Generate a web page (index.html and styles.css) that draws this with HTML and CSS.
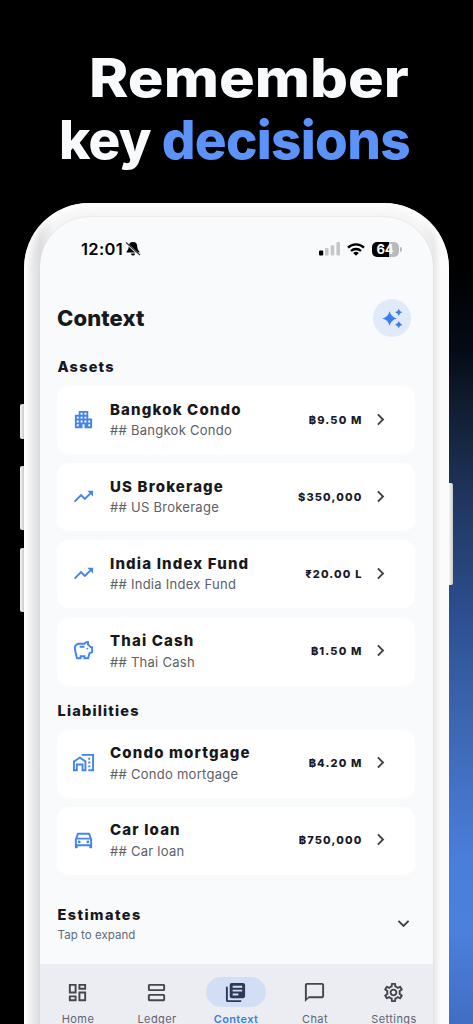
FILE: index.html
```html
<!DOCTYPE html>
<html lang="en">
<head>
<meta charset="utf-8">
<title>Context</title>
<link rel="stylesheet" href="styles.css">
</head>
<body>
<svg width="0" height="0" class="defs">
  <symbol id="apartment" viewBox="0 0 24 24"><path d="M17 11V3H7v4H3v14h8v-4h2v4h8V11h-4zM7 19H5v-2h2v2zm0-4H5v-2h2v2zm0-4H5V9h2v2zm4 4H9v-2h2v2zm0-4H9V9h2v2zm0-4H9V5h2v2zm4 8h-2v-2h2v2zm0-4h-2V9h2v2zm0-4h-2V5h2v2zm4 12h-2v-2h2v2zm0-4h-2v-2h2v2z"/></symbol>
  <symbol id="trend" viewBox="0 0 24 24"><path d="m16 6 2.29 2.29-4.88 4.88-4-4L2 16.59 3.41 18l6-6 4 4 6.3-6.29L22 12V6z"/></symbol>
  <symbol id="savings" viewBox="0 0 24 24"><path d="M15 10c0-.55.45-1 1-1s1 .45 1 1-.45 1-1 1-1-.45-1-1zM8 9h5V7H8v2zm14-1.500v6.970l-2.820.940L17.500 21H12v-2h-2v2H4.500S2 12.540 2 9.500C2 6.460 4.460 4 7.500 4h5c.910-1.210 2.360-2 4-2 .830 0 1.500.670 1.500 1.500 0 .210-.040.400-.120.580-.140.340-.260.730-.320 1.150l2.270 2.270H22zm-2 2h-1L15.500 6c0-.650.090-1.290.260-1.910-.970.250-1.760.970-2.090 1.910H7.500C5.570 6 4 7.570 4 9.500c0 1.880 1.220 6.650 2.010 9.500H8v-2h6v2h2.010l1.550-5.150 2.440-.820V9.500z"/></symbol>
  <symbol id="homework" viewBox="0 0 24 24"><path d="M17 15h2v2h-2zM17 11h2v2h-2zM17 7h2v2h-2zM10 3v1.510l2 1.330V5h9v14h-4v2h6V3zM8.170 5.700 1 10.480V21h5v-6h4v6h5V10.250L8.170 5.700zM13 19h-1v-6H4v6H3v-7.460l5.170-3.450L13 11.380V19z"/></symbol>
  <symbol id="car" viewBox="0 0 24 24"><path d="M18.920 6.010C18.720 5.420 18.160 5 17.500 5h-11c-.660 0-1.210.420-1.420 1.010L3 12v8c0 .550.450 1 1 1h1c.550 0 1-.450 1-1v-1h12v1c0 .550.450 1 1 1h1c.550 0 1-.450 1-1v-8l-2.080-5.990zM6.850 7h10.290l1.080 3.110H5.770L6.850 7zM19 17H5v-5h14v5z"/><circle cx="7.500" cy="14.500" r="1.500"/><circle cx="16.500" cy="14.500" r="1.500"/></symbol>
  <symbol id="chevron" viewBox="0 0 24 24"><path d="M8.590 16.590 13.170 12 8.590 7.410 10 6l6 6-6 6z"/></symbol>
  <symbol id="dashboard" viewBox="0 0 24 24"><path d="M19 5v2h-4V5h4M9 5v6H5V5h4m10 8v6h-4v-6h4M9 17v2H5v-2h4M21 3h-8v6h8V3zM11 3H3v10h8V3zm10 8h-8v10h8V11zm-10 4H3v6h8v-6z"/></symbol>
  <symbol id="agenda" viewBox="0 0 24 24"><g fill="none" stroke="currentColor" stroke-width="2"><rect x="4" y="4" width="16" height="5.500" rx=".6"/><rect x="4" y="14.500" width="16" height="5.500" rx=".6"/></g></symbol>
  <symbol id="books" viewBox="0 0 24 24"><path d="M4 6H2v14c0 1.100.9 2 2 2h14v-2H4V6zm16-4H8c-1.100 0-2 .9-2 2v12c0 1.100.9 2 2 2h12c1.100 0 2-.9 2-2V4c0-1.100-.9-2-2-2zm-1 9H9V9h10v2zm-4 4H9v-2h6v2zm4-8H9V5h10v2z"/></symbol>
  <symbol id="chat" viewBox="0 0 24 24"><path d="M20 2H4c-1.100 0-2 .9-2 2v18l4-4h14c1.100 0 2-.9 2-2V4c0-1.100-.9-2-2-2zm0 14H6l-2 2V4h16v12z"/></symbol>
  <symbol id="gear" viewBox="0 0 24 24"><path d="M19.43 12.98c.04-.32.07-.64.07-.98 0-.34-.03-.66-.07-.98l2.11-1.65c.19-.15.24-.42.12-.64l-2-3.46c-.09-.16-.26-.25-.44-.25-.06 0-.12.01-.17.03l-2.49 1c-.52-.4-1.08-.73-1.69-.98l-.38-2.65C14.46 2.18 14.25 2 14 2h-4c-.25 0-.46.18-.49.42l-.38 2.65c-.61.25-1.17.59-1.69.98l-2.49-1c-.06-.02-.12-.03-.18-.03-.17 0-.34.09-.43.25l-2 3.46c-.13.22-.07.49.12.64l2.11 1.65c-.04.32-.07.65-.07.98 0 .33.03.66.07.98l-2.11 1.65c-.19.15-.24.42-.12.64l2 3.46c.09.16.26.25.44.25.06 0 .12-.01.17-.03l2.49-1c.52.4 1.08.73 1.69.98l.38 2.65c.03.24.24.42.49.42h4c.25 0 .46-.18.49-.42l.38-2.65c.61-.25 1.17-.59 1.69-.98l2.49 1c.06.02.12.03.18.03.17 0 .34-.09.43-.25l2-3.46c.12-.22.07-.49-.12-.64l-2.11-1.65zm-1.98-1.71c.04.31.05.52.05.73 0 .21-.02.43-.05.73l-.14 1.13.89.7 1.08.84-.7 1.21-1.27-.51-1.04-.42-.9.68c-.43.32-.84.56-1.25.73l-1.06.43-.16 1.13-.2 1.35h-1.4l-.19-1.35-.16-1.13-1.06-.43c-.43-.18-.83-.41-1.23-.71l-.91-.7-1.06.43-1.27.51-.7-1.21 1.08-.84.89-.7-.14-1.13c-.03-.31-.05-.54-.05-.74s.02-.43.05-.73l.14-1.13-.89-.7-1.08-.84.7-1.21 1.27.51 1.04.42.9-.68c.43-.32.84-.56 1.25-.73l1.06-.43.16-1.13.2-1.35h1.39l.19 1.35.16 1.13 1.06.43c.43.18.83.41 1.23.71l.91.7 1.06-.43 1.27-.51.7 1.21-1.07.85-.89.7.14 1.13zM12 8c-2.21 0-4 1.790-4 4s1.790 4 4 4 4-1.790 4-4-1.790-4-4-4zm0 6c-1.100 0-2-.9-2-2s.9-2 2-2 2 .9 2 2-.9 2-2 2z"/></symbol>
</svg>
<main class="poster">
  <h1 class="headline"><span class="line1">Remember</span><span class="line2">key <em>decisions</em></span></h1>
  <div class="phone">
    <i class="key mute"></i><i class="key up"></i><i class="key down"></i><i class="key power"></i>
    <div class="screen">
      <div class="status">
        <span class="time">12:01</span>
        <svg class="bell" viewBox="0 0 16 16"><path d="M8 1c-3 0-4.300 2-4.300 4.500 0 3.500-2.200 4.300-2.200 6h13c0-1.700-2.200-2.500-2.200-6C12.300 3 11 1 8 1zM6 12.500a2 2 0 0 0 4 0z"/><path d="M1 2 15 14.500" stroke="#f8fafc" stroke-width="2"/><path d="M1 1.500 15 14" stroke="#333" stroke-width="1.100"/></svg>
        <svg class="signal" viewBox="0 0 22 14"><rect x="0" y="8.500" width="4.200" height="5" rx="1" fill="#000"/><g fill="#c5c6c8"><rect x="6" y="6" width="3.600" height="7.500" rx="1"/><rect x="11.700" y="3.200" width="3.600" height="10.300" rx="1"/><rect x="17.400" y="0" width="3.600" height="13.500" rx="1"/></g></svg>
        <svg class="wifi" viewBox="0 0 18 13"><g fill="none" stroke="#000" stroke-width="2.300"><path d="M1 4.700a11.500 11.500 0 0 1 16 0"/><path d="M4 8a7.200 7.200 0 0 1 10 0"/></g><path d="M9 12.800 6.200 10a4 4 0 0 1 5.600 0z"/></svg>
        <span class="battery">64</span>
      </div>
      <header class="top"><h2>Context</h2>
        <span class="spark"><svg viewBox="0 0 24 24"><path d="M9 4.500Q10.500 10.500 16.500 12 10.500 13.500 9 19.500 7.500 13.500 1.500 12 7.500 10.500 9 4.500zM18.500 1.700Q19.200 4.800 22.300 5.500 19.200 6.200 18.500 9.300 17.800 6.200 14.700 5.500 17.800 4.800 18.500 1.700zM18.500 14.700Q19.200 17.800 22.300 18.500 19.200 19.200 18.500 22.300 17.800 19.200 14.700 18.500 17.800 17.800 18.500 14.700z"/></svg></span>
      </header>
      <h3 class="label">Assets</h3>
      <section class="list">
        <article class="card"><svg class="ico"><use href="#apartment"/></svg><div class="copy"><b>Bangkok Condo</b><span>## Bangkok Condo</span></div><strong>฿9.50 M</strong><svg class="chev"><use href="#chevron"/></svg></article>
        <article class="card"><svg class="ico"><use href="#trend"/></svg><div class="copy"><b>US Brokerage</b><span>## US Brokerage</span></div><strong>$350,000</strong><svg class="chev"><use href="#chevron"/></svg></article>
        <article class="card"><svg class="ico"><use href="#trend"/></svg><div class="copy"><b>India Index Fund</b><span>## India Index Fund</span></div><strong>₹20.00 L</strong><svg class="chev"><use href="#chevron"/></svg></article>
        <article class="card"><svg class="ico"><use href="#savings"/></svg><div class="copy"><b>Thai Cash</b><span>## Thai Cash</span></div><strong>฿1.50 M</strong><svg class="chev"><use href="#chevron"/></svg></article>
      </section>
      <h3 class="label liabilities">Liabilities</h3>
      <section class="list">
        <article class="card"><svg class="ico"><use href="#homework"/></svg><div class="copy"><b>Condo mortgage</b><span>## Condo mortgage</span></div><strong>฿4.20 M</strong><svg class="chev"><use href="#chevron"/></svg></article>
        <article class="card"><svg class="ico"><use href="#car"/></svg><div class="copy"><b>Car loan</b><span>## Car loan</span></div><strong>฿750,000</strong><svg class="chev"><use href="#chevron"/></svg></article>
      </section>
      <section class="estimates"><div><h3>Estimates</h3><p>Tap to expand</p></div><svg class="chev open"><use href="#chevron"/></svg></section>
      <nav class="tabs">
        <a><i><svg><use href="#dashboard"/></svg></i>Home</a>
        <a><i><svg><use href="#agenda"/></svg></i>Ledger</a>
        <a class="on"><i><svg><use href="#books"/></svg></i>Context</a>
        <a><i><svg><use href="#chat"/></svg></i>Chat</a>
        <a><i><svg><use href="#gear"/></svg></i>Settings</a>
      </nav>
    </div>
  </div>
</main>
</body>
</html>
```
FILE: styles.css
```css
* { box-sizing: border-box; }
body { margin: 0; background: #000; font-family: Inter, "Noto Sans", sans-serif; overflow: hidden; }
h1, h2, h3, p { margin: 0; }
svg { display: block; fill: currentColor; flex: none; }
.defs { position: absolute; }
.poster { height: 1024px; overflow: hidden; display: flex; flex-direction: column; align-items: flex-start;
  background: linear-gradient(90deg, #000 50%, transparent 90%), linear-gradient(180deg, #000 0, #000 270px, #050b16 350px, #101b2e 400px, #20365f 500px, #2d5092 620px, #3d66b1 720px, #4a7edb 860px, #4b80dc 930px, #426ec4 1024px); }
.headline { flex: none; width: 473px; height: 203px; padding-top: 47px; font-size: 53px; line-height: 62px; font-weight: 800; color: #f8fafc; display: flex; flex-direction: column; align-items: flex-start; white-space: nowrap; }
.headline em { font-style: normal; color: #5b93fb; }
.line1 { margin-left: 88.500px; transform-origin: 0 50%; transform: scaleX(1.125); }
.line2 { margin-left: 59px; letter-spacing: -.7px; }
.phone { position: relative; flex: none; width: 424.500px; height: 960px; margin-left: 24px; padding: 14px 15.500px 0 16px; border-radius: 65px; background: linear-gradient(90deg, #fff 0, #efeff0 6px, #e4e4e6 12px, #dcdde0 16px, #f5f5f5 30px, #f5f5f5 395px, #e9e9ea 410px, #fcfcfd 417px, #f9fafb 424px); box-shadow: inset 0 5px 8px #fff; }
.screen { height: 940px; border-radius: 50px 50px 0 0; background: #f8fafc; overflow: hidden; color: #17181c; box-shadow: 0 0 2px #d5d6da; }
.key { position: absolute; width: 4px; background: linear-gradient(90deg, #f6f6f7, #c9c9cc); border-radius: 2px 0 0 2px; left: -4px; }
.mute { top: 201px; height: 35px; }
.up { top: 263px; height: 64px; }
.down { top: 345px; height: 64px; }
.power { left: auto; right: -4px; top: 280px; height: 102px; border-radius: 0 2px 2px 0; }
.status { height: 64px; padding: 0 34.500px 0 41px; display: flex; align-items: center; color: #000; }
.time { font-size: 16.500px; font-weight: 600; letter-spacing: .35px; }
.bell { width: 16px; height: 16px; margin-left: 2px; }
.signal { width: 22px; height: 14px; margin-left: auto; }
.wifi { width: 18px; height: 13px; margin: 0 7px 0 6px; }
.battery { position: relative; width: 27px; height: 15px; border-radius: 5px; background: linear-gradient(90deg, #000 63%, #b9babd 63%); color: #fff; font-size: 13px; line-height: 15px; font-weight: 700; text-align: center; }
.battery::after { content: ""; position: absolute; right: -3px; top: 5px; width: 2px; height: 5px; border-radius: 0 2px 2px 0; background: #b9babd; }
.top { height: 76px; padding: 0 22px 2px 17px; display: flex; justify-content: space-between; align-items: center; }
h2 { font-size: 22px; font-weight: 800; letter-spacing: .1px; }
.spark { width: 38px; height: 38px; border-radius: 50%; background: #e1eafa; color: #3b7ded; display: grid; place-items: center; }
.spark svg { width: 23px; height: 23px; }
h3 { font-size: 14.500px; line-height: 20px; font-weight: 800; letter-spacing: 1.200px; }
.label { padding-left: 17.500px; }
.estimates h3 { letter-spacing: 1.450px; }
.list { padding: 9px 18.500px 0 17px; display: grid; gap: 9.200px; }
.card { height: 68px; border-radius: 12px; background: #fff; display: flex; align-items: center; padding: 0 20px 0 15px; }
.ico { width: 23px; height: 23px; color: #4584ea; margin-bottom: 2px; }
.copy { flex: 1; margin-left: 15px; line-height: 20.500px; white-space: nowrap; }
.copy b, .copy span { display: block; }
.copy b { font-size: 15px; font-weight: 800; letter-spacing: 1.150px; }
.copy span { font-size: 13px; letter-spacing: .27px; color: #5d6066; }
.card strong { font-size: 11px; font-weight: 800; letter-spacing: 1.150px; color: #171a2b; margin-bottom: 1px; }
.chev { width: 23px; height: 23px; color: #414247; }
.card .chev { margin: 0 3px 2px 6px; }
.liabilities { margin-top: 15px; }
.estimates { display: flex; justify-content: space-between; align-items: center; height: 89.500px; padding: 20px 18px 9px 17.500px; }
.estimates p { font-size: 11.500px; line-height: 20px; letter-spacing: .05px; color: #5f6b7a; }
.open { transform: rotate(90deg); }
.estimates .open { margin-bottom: 3px; }
.tabs { height: 80px; background: #ecedf3; display: grid; grid-template-columns: repeat(5, 79px); margin-left: -1.500px; padding: 13px 0 0; }
.tabs a { display: flex; flex-direction: column; align-items: center; font-size: 11px; line-height: 16px; font-weight: 400; color: #5f6270; letter-spacing: .4px; }
.tabs i { width: 60px; height: 30px; border-radius: 15px; display: grid; place-items: center; margin-bottom: 4px; color: #44464f; }
.tabs svg { width: 23px; height: 23px; margin-right: 1px; }
.tabs .on { color: #3b7ded; font-weight: 600; }
.tabs .on i { background: #d1def5; color: #2c3957; }
```
